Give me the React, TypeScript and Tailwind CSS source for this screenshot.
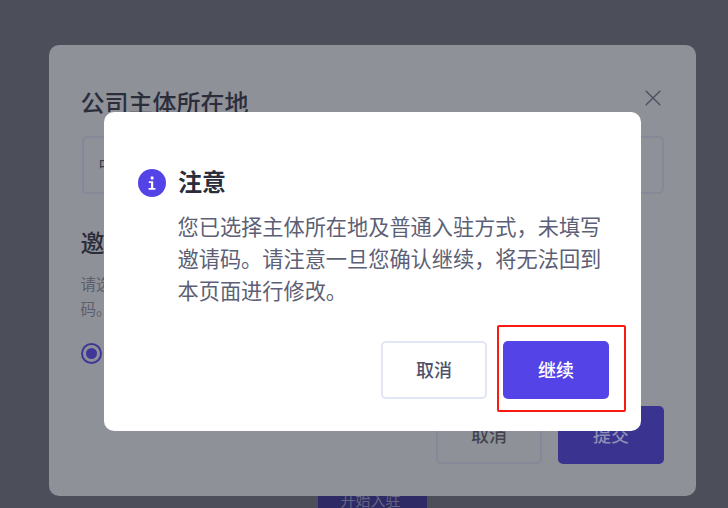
const cjk = "font-['Inter','Noto_Sans_CJK_SC',sans-serif]";

function CloseIcon() {
    return (
        <svg width="16" height="16" viewBox="0 0 16 16" fill="none" stroke="#4e5060" strokeWidth="1.4">
            <path d="M0.7 0.7 15.3 15.3M15.3 0.7 0.7 15.3" />
        </svg>
    );
}

function InfoIcon() {
    return (
        <svg width="28" height="28" viewBox="0 0 28 28" className="shrink-0">
            <circle cx="14" cy="14" r="14" fill="#5443e6" />
            <rect x="12.7" y="7.6" width="2.8" height="2.8" rx="0.4" fill="#fff" />
            <path d="M10.8 12.2h4.4v6.9h2.2v1.7h-6.8v-1.7h2.4v-5.2h-2.2z" fill="#fff" />
        </svg>
    );
}

export default function App() {
    return (
        <div lang="zh-CN" className={`relative w-[728px] h-[508px] overflow-hidden bg-[#4c4e5a] ${cjk}`}>
            {/* page button under the overlay */}
            <div className="absolute left-[318px] top-[480px] w-[109px] h-[42px] flex items-center justify-center pr-[4px] bg-[#2e2a66] text-[15px] text-[#66657f]">
                开始入驻
            </div>

            {/* first modal, dimmed */}
            <div className="absolute left-[49px] top-[45px] w-[647px] h-[451px] rounded-[10px] bg-[#8f9198] pl-[32.5px] pr-[32px] pt-[41px] flex flex-col">
                <div className="flex items-start justify-between h-[50px]">
                    <h2 className="-ml-[1px] text-[24px] leading-[36px] font-medium text-[#2b2d3b]">公司主体所在地</h2>
                    <div className="mt-[4px] mr-[3px]">
                        <CloseIcon />
                    </div>
                </div>
                <div className="h-[58px] rounded-[5px] border-2 border-[#858897] flex items-center px-[15px] text-[16px] text-[#3c3e4c]">
                    中国
                </div>
                <h3 className="-ml-[1px] mt-[32px] text-[24px] leading-[36px] font-medium text-[#2b2d3b]">邀请码</h3>
                <p className="-ml-[1px] mt-[10px] w-[530px] text-[15.5px] leading-[25px] text-[#5c5e6e]">
                    请选择入驻方式，如您有邀请码请填写，如您没有邀请码可以无需填写邀请码。
                </p>
                <div className="mt-[19px] -ml-[1px] flex items-center gap-2">
                    <span className="w-[21px] h-[21px] rounded-full border-2 border-[#3f3798] flex items-center justify-center">
                        <span className="w-[11px] h-[11px] rounded-full bg-[#3f3798]" />
                    </span>
                    <span className="text-[16px] text-[#3c3e4c]">普通入驻</span>
                </div>
                <div className="mt-[41px] flex justify-end gap-4">
                    <button className="w-[106px] h-[58px] rounded-[5px] border-2 border-[#858897] text-[18px] font-medium text-[#41434f]">取消</button>
                    <button className="w-[106px] h-[58px] rounded-[5px] bg-[#3a3390] text-[18px] font-medium text-[#8f8fb5]">提交</button>
                </div>
            </div>

            {/* confirm dialog */}
            <div className="absolute left-[104px] top-[112px] w-[537px] h-[319px] rounded-[10px] bg-white pl-[34px] pr-[32px] pt-[57px] flex flex-col">
                <div className="flex items-center gap-3 h-[28px]">
                    <InfoIcon />
                    <span className="text-[24px] font-semibold text-[#2b2d3b]">注意</span>
                </div>
                <p className="mt-[14px] ml-[39.5px] w-[430px] text-[21.2px] leading-[32px] text-[#5c5f75]">
                    您已选择主体所在地及普通入驻方式，未填写邀请码。请注意一旦您确认继续，将无法回到本页面进行修改。
                </p>
                <div className="mt-auto mb-[32px] flex justify-end gap-4">
                    <button className="w-[106px] h-[58px] rounded-[5px] border-2 border-[#e2e6f3] bg-white text-[18px] font-medium text-[#50526a]">取消</button>
                    <button className="w-[106px] h-[58px] rounded-[5px] bg-[#5443e6] text-[18px] font-medium text-white">继续</button>
                </div>
            </div>

            {/* red annotation box */}
            <div className="absolute left-[497px] top-[325px] w-[129px] h-[87px] border-2 border-[#fb1a12] rounded-[2px]" />
        </div>
    );
}
